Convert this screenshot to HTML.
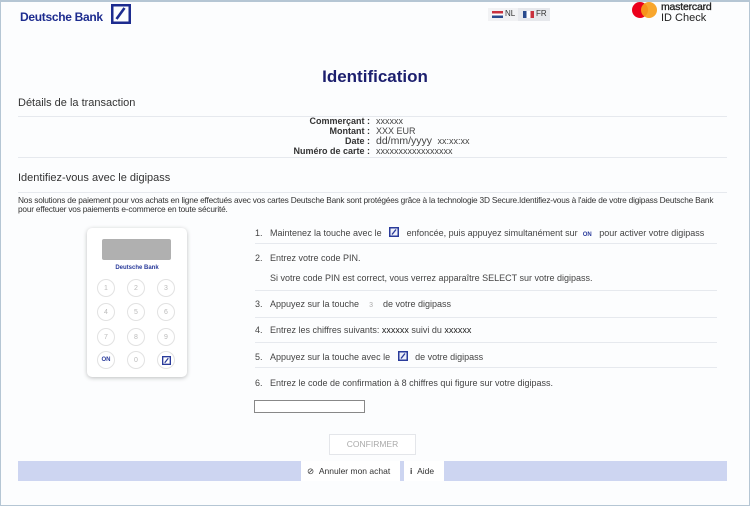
<!DOCTYPE html>
<html><head><meta charset="utf-8"><style>
*{margin:0;padding:0;box-sizing:border-box}
body{width:750px;height:506px;overflow:hidden;font-family:"Liberation Sans",Arial,sans-serif;background:#fff;position:relative;color:#333}
.frame{position:absolute;left:0;top:0;width:750px;height:506px;border:1px solid #b5c6d4;border-top:2px solid #b5c6d4;background:#fcfdfe}
.a{position:absolute;white-space:nowrap;line-height:1.15}
.hr{position:absolute;left:18px;width:709px;height:1px;background:#e6e9ee}
.lbl{position:absolute;right:380px;font-size:9px;font-weight:bold;color:#333;text-align:right}
.val{position:absolute;left:376px;font-size:9px;color:#444}
.step{position:absolute;left:255px;font-size:9px;color:#444;white-space:nowrap}
.step b{font-weight:normal;display:inline-block;width:15px}
.sl{position:absolute;left:255px;width:462px;height:1px;background:#e6e9ee}
.k{position:absolute;width:18px;height:18px;border:1px solid #e2e2e2;border-radius:50%;font-size:7px;color:#bbb;display:flex;align-items:center;justify-content:center}
.dbi{display:inline-block;vertical-align:-1px}
</style></head><body>
<div class="frame"></div>
<div class="a" style="left:20px;top:11px;font-size:12px;font-weight:bold;color:#1d2c8f;letter-spacing:-0.3px">Deutsche Bank</div>
<svg class="a" style="left:111px;top:4px" width="20" height="20" viewBox="0 0 20 20"><rect x="1.25" y="1.25" width="17.5" height="17.5" fill="none" stroke="#1d2c8f" stroke-width="2.5"/><path d="M5.5 15 L13.5 4" stroke="#1d2c8f" stroke-width="2.6"/></svg>
<div class="a" style="left:488px;top:8px;width:62px;height:13px;background:#f1f2f4"></div>
<div class="a" style="left:518px;top:8px;width:32px;height:13px;background:#e6e8ec"></div>
<div class="a" style="left:492px;top:11px;width:11px;height:7px;background:linear-gradient(#c8313e 33%,#fff 33%,#fff 66%,#2a4b8d 66%)"></div>
<div class="a" style="left:505px;top:9px;font-size:8px;color:#333">NL</div>
<div class="a" style="left:523px;top:11px;width:11px;height:7px;background:linear-gradient(90deg,#2a4b8d 33%,#fff 33%,#fff 66%,#c8313e 66%)"></div>
<div class="a" style="left:536px;top:9px;font-size:8px;color:#333">FR</div>
<div class="a" style="left:632px;top:2px;width:16px;height:16px;border-radius:50%;background:#eb001b"></div>
<div class="a" style="left:641px;top:2px;width:16px;height:16px;border-radius:50%;background:#f79e1b;opacity:.92"></div>
<div class="a" style="left:661px;top:2px;font-size:10.5px;line-height:11px;color:#222;letter-spacing:-0.2px;-webkit-text-stroke:0.3px #222">mastercard</div>
<div class="a" style="left:661px;top:12px;font-size:11px;line-height:12px;color:#222">ID Check</div>
<div class="a" style="left:0;width:750px;top:67px;text-align:center;font-size:17px;font-weight:bold;color:#1c1f6e">Identification</div>
<div class="a" style="left:18px;top:97px;font-size:11px;color:#333">Détails de la transaction</div>
<div class="hr" style="top:116px"></div>
<div class="lbl" style="top:116px">Commerçant :</div><div class="val" style="top:116px">xxxxxx</div>
<div class="lbl" style="top:126px">Montant :</div><div class="val" style="top:126px">XXX EUR</div>
<div class="lbl" style="top:136px">Date :</div><div class="val" style="top:135px;font-size:10.5px">dd/mm/yyyy <span style="font-size:9px">&nbsp;xx:xx:xx</span></div>
<div class="lbl" style="top:146px">Numéro de carte :</div><div class="val" style="top:146px">xxxxxxxxxxxxxxxxx</div>
<div class="hr" style="top:157px"></div>
<div class="a" style="left:18px;top:172px;font-size:11px;color:#333">Identifiez-vous avec le digipass</div>
<div class="hr" style="top:192px"></div>
<div class="a" style="left:18px;top:196px;font-size:8.3px;color:#333;line-height:8.5px;letter-spacing:-0.2px">Nos solutions de paiement pour vos achats en ligne effectués avec vos cartes Deutsche Bank sont protégées grâce à la technologie 3D Secure.Identifiez-vous à l'aide de votre digipass Deutsche Bank<br>pour effectuer vos paiements e-commerce en toute sécurité.</div>
<div class="a" style="left:87px;top:228px;width:100px;height:149px;background:#fff;border-radius:5px;box-shadow:0 1px 4px rgba(0,0,0,.25)"></div>
<div class="a" style="left:102px;top:239px;width:69px;height:21px;background:#b0b0b0;border-radius:2px"></div>
<div class="a" style="left:87px;width:100px;top:265px;text-align:center;font-size:6px;font-weight:bold;color:#2a3b9b">Deutsche Bank</div>
<div class="k" style="left:97px;top:279px">1</div><div class="k" style="left:127px;top:279px">2</div><div class="k" style="left:157px;top:279px">3</div>
<div class="k" style="left:97px;top:303px">4</div><div class="k" style="left:127px;top:303px">5</div><div class="k" style="left:157px;top:303px">6</div>
<div class="k" style="left:97px;top:328px">7</div><div class="k" style="left:127px;top:328px">8</div><div class="k" style="left:157px;top:328px">9</div>
<div class="k" style="left:97px;top:351px;color:#2a3b9b;font-weight:bold;font-size:6px">ON</div><div class="k" style="left:127px;top:351px">0</div><div class="k" style="left:157px;top:351px"><svg width="9" height="9" viewBox="0 0 10 10"><rect x="0.75" y="0.75" width="8.5" height="8.5" fill="none" stroke="#2a3b9b" stroke-width="1.5"/><path d="M3 7.5 L7 2.5" stroke="#2a3b9b" stroke-width="1.4"/></svg></div>
<div class="step" style="top:227px"><b>1.</b>Maintenez la touche avec le &nbsp;&nbsp;<svg class="dbi" width="10" height="10" viewBox="0 0 10 10"><rect x="0.75" y="0.75" width="8.5" height="8.5" fill="#eef0fa" stroke="#2a3b9b" stroke-width="1.5"/><path d="M3 7.5 L7 2.5" stroke="#2a3b9b" stroke-width="1.4"/></svg>&nbsp;&nbsp; enfoncée, puis appuyez simultanément sur &nbsp;<span style="font-size:6px;color:#2a3b9b;font-weight:bold">ON</span>&nbsp;&nbsp; pour activer votre digipass</div>
<div class="sl" style="top:243px"></div>
<div class="step" style="top:253px"><b>2.</b>Entrez votre code PIN.</div>
<div class="step" style="top:273px"><b></b>Si votre code PIN est correct, vous verrez apparaître SELECT sur votre digipass.</div>
<div class="sl" style="top:290px"></div>
<div class="step" style="top:299px"><b>3.</b>Appuyez sur la touche &nbsp;&nbsp;&nbsp;<span style="font-size:7px;color:#aaa">3</span>&nbsp;&nbsp;&nbsp; de votre digipass</div>
<div class="sl" style="top:317px"></div>
<div class="step" style="top:325px"><b>4.</b>Entrez les chiffres suivants: <span style="color:#222">xxxxxx</span> suivi du <span style="color:#222">xxxxxx</span></div>
<div class="sl" style="top:342px"></div>
<div class="step" style="top:351px"><b>5.</b>Appuyez sur la touche avec le &nbsp;&nbsp;<svg class="dbi" width="10" height="10" viewBox="0 0 10 10"><rect x="0.75" y="0.75" width="8.5" height="8.5" fill="#eef0fa" stroke="#2a3b9b" stroke-width="1.5"/><path d="M3 7.5 L7 2.5" stroke="#2a3b9b" stroke-width="1.4"/></svg>&nbsp;&nbsp; de votre digipass</div>
<div class="sl" style="top:367px"></div>
<div class="step" style="top:378px"><b>6.</b>Entrez le code de confirmation à 8 chiffres qui figure sur votre digipass.</div>
<div class="a" style="left:254px;top:400px;width:111px;height:13px;border:1px solid #888;background:#fff"></div>
<div class="a" style="left:329px;top:434px;width:87px;height:21px;border:1px solid #e4e6ea;background:#fff;font-size:8.5px;color:#aaa;text-align:center;line-height:19px">CONFIRMER</div>
<div class="a" style="left:18px;top:461px;width:709px;height:20px;background:#cdd5f1"></div>
<div class="a" style="left:301px;top:461px;width:99px;height:20px;background:#fff;font-size:8.5px;color:#333;line-height:20px;padding-left:6px">⊘&nbsp;&nbsp;Annuler mon achat</div>
<div class="a" style="left:404px;top:461px;width:40px;height:20px;background:#fff;font-size:8.5px;color:#333;line-height:20px;padding-left:6px"><b>i</b>&nbsp;&nbsp;Aide</div>
</body></html>
